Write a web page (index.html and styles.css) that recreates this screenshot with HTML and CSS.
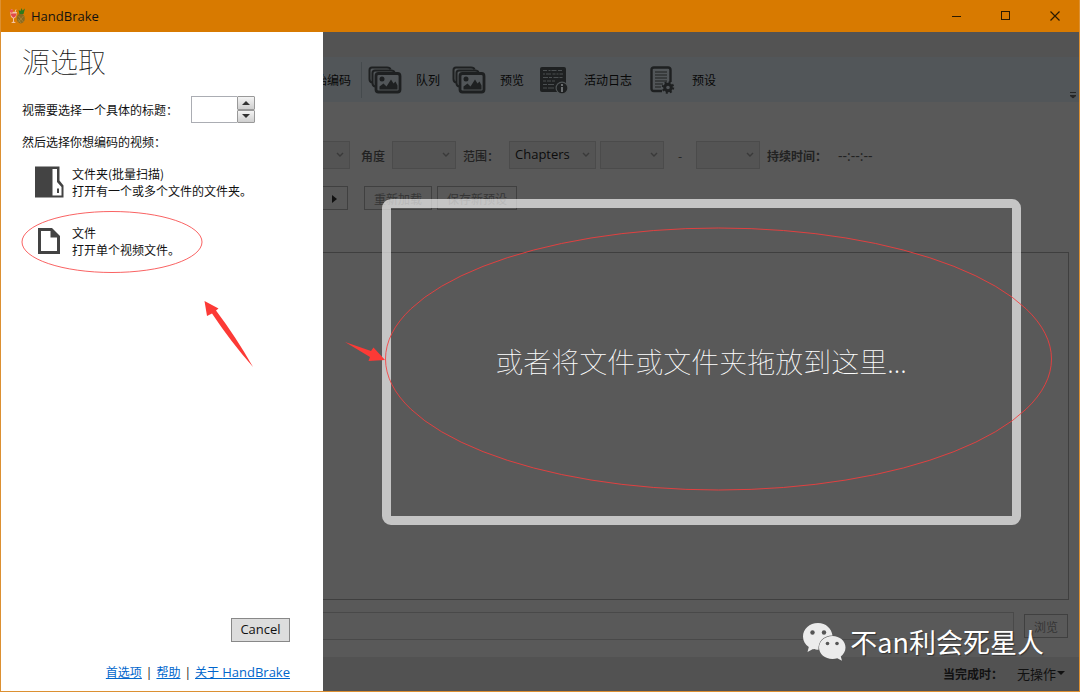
FILE: index.html
```html
<!DOCTYPE html>
<html lang="zh-CN">
<head>
<meta charset="utf-8">
<meta name="viewport" content="width=device-width, initial-scale=1">
<title>HandBrake</title>
<link rel="stylesheet" href="styles.css">
</head>
<body>
<svg class="defs" width="0" height="0" aria-hidden="true">
  <symbol id="chevron" viewBox="0 0 8 6"><path d="M1 1l3 3 3-3" fill="none" stroke="currentColor" stroke-width="1.4"/></symbol>
  <symbol id="pictures" viewBox="0 0 34 28">
    <path d="M4 16.500Q1.500 16 1.500 13V4Q1.500 1.500 4 1.500H19Q22 1.500 22.500 3.500" fill="none" stroke="currentColor" stroke-width="2"/>
    <path d="M7 20.500Q4.500 20 4.500 17V7Q4.500 4.500 7 4.500H23Q26 4.500 26.500 6.500" fill="none" stroke="currentColor" stroke-width="2"/>
    <rect x="8" y="7.500" width="24" height="18.500" rx="2.500" fill="none" stroke="currentColor" stroke-width="2.800"/>
    <circle cx="14" cy="13" r="2.500" fill="currentColor"/>
    <path d="M11.500 23.500v-3l4-3 3 3 4.500-7 2.500 4 2-2 2 4v4z" fill="currentColor"/>
  </symbol>
</svg>
<div class="window">
  <header class="titlebar">
    <svg class="app-icon" viewBox="0 0 16 16" width="16" height="16" aria-hidden="true">
      <path d="M1 4h7l-1 5-2 1.500v3l2 1.500H2l2-1.500v-3L2 9z" fill="#f3c4a4"/>
      <path d="M1.500 5.500h6l-1 3-2 1.200L2.500 8z" fill="#e0484a"/>
      <path d="M4 4L2.500 1M6 4l1-2.500" stroke="#f3c4a4"/>
      <circle cx="2.500" cy="3" r="1.800" fill="#e85450"/>
      <ellipse cx="11.800" cy="10.500" rx="4" ry="5" fill="#8a6a20"/>
      <path d="M9.500 8l5 6M9 11l3 4M14.500 8l-5 6" stroke="#b8903c" stroke-width=".6"/>
      <path d="M10.500 6L9.500 2l2 1 1-3 1 2.500L16 .5 14.500 6z" fill="#2f7a1c"/>
    </svg>
    <h1 class="app-name">HandBrake</h1>
    <div class="window-controls">
      <button class="window-button" type="button" aria-label="Minimize"><svg width="10" height="10" viewBox="0 0 10 10"><path d="M0 5.500h9" stroke="#2b1a00"/></svg></button>
      <button class="window-button" type="button" aria-label="Maximize"><svg width="10" height="10" viewBox="0 0 10 10"><rect x=".5" y=".5" width="8" height="8" fill="none" stroke="#2b1a00"/></svg></button>
      <button class="window-button" type="button" aria-label="Close"><svg width="10" height="10" viewBox="0 0 10 10"><path d="M.5.5l9 9M9.500.5l-9 9" stroke="#2b1a00" stroke-width="1.200"/></svg></button>
    </div>
  </header>

  <div class="content">
    <aside class="source-panel">
      <h2 class="source-heading">源选取</h2>
      <div class="title-row">
        <label for="title-number">视需要选择一个具体的标题：</label>
        <div class="spinner">
          <input class="spinner-input" id="title-number" type="text">
          <div class="spinner-buttons">
            <button class="spinner-button" type="button" aria-label="增加"><svg width="8" height="4" viewBox="0 0 8 4"><path d="M0 4l4-4 4 4z" fill="#333"/></svg></button>
            <button class="spinner-button" type="button" aria-label="减少"><svg width="8" height="4" viewBox="0 0 8 4"><path d="M0 0l4 4 4-4z" fill="#333"/></svg></button>
          </div>
        </div>
      </div>
      <p class="source-hint">然后选择你想编码的视频：</p>
      <div class="source-options">
        <button class="source-option" type="button">
          <svg class="option-icon" width="30" height="32" viewBox="0 0 30 32" aria-hidden="true">
            <path d="M0 .5h24.500v14l4 5v12H0z" fill="#434343"/>
            <path d="M17.500 3H22v13l4.500 5v8.500h-9z" fill="#fff"/>
            <rect x="22" y="22.500" width="2" height="4.500" fill="#434343"/>
          </svg>
          <span>文件夹(批量扫描)<br>打开有一个或多个文件的文件夹。</span>
        </button>
        <button class="source-option" type="button">
          <svg class="option-icon" width="30" height="32" viewBox="0 0 30 32" aria-hidden="true">
            <path d="M3 3h14l8 8v18H3z" fill="#434343"/>
            <path d="M6 6h9.500v6.500H22V26H6z" fill="#fff"/>
          </svg>
          <span>文件<br>打开单个视频文件。</span>
        </button>
      </div>
      <div class="source-footer">
        <button class="cancel-button" type="button">Cancel</button>
        <nav class="links"><a href="#preferences">首选项</a><span>|</span><a href="#help">帮助</a><span>|</span><a href="#about">关于 <span class="latin">HandBrake</span></a></nav>
      </div>
    </aside>

    <main class="workspace">
      <div class="menu-strip"></div>
      <div class="toolbar">
        <button class="tool tool-start" type="button">开始编码</button>
        <span class="tool-separator"></span>
        <button class="tool" type="button"><span class="tool-icon"><svg width="34" height="28"><use href="#pictures"/></svg></span>队列</button>
        <button class="tool" type="button"><span class="tool-icon"><svg width="34" height="28"><use href="#pictures"/></svg></span>预览</button>
        <button class="tool" type="button"><span class="tool-icon">
          <svg width="28" height="28" viewBox="0 0 28 28">
            <rect x="0" y="1" width="26" height="25" rx="2" fill="currentColor"/>
            <g stroke="#4b4f51" stroke-width="1.200">
              <path d="M3 4.500h20" stroke-dasharray="4 1.500 2 1 5 1.500"/>
              <path d="M3 8h20" stroke-dasharray="2 1 5 1.500 3 1"/>
              <path d="M3 11.500h20" stroke-dasharray="5 1 3 1.500"/>
              <path d="M3 15h13" stroke-dasharray="3 1 4 1"/>
              <path d="M3 18.500h12M3 22h12" stroke-dasharray="4 1 6 1"/>
            </g>
            <circle cx="22" cy="22" r="6.500" fill="#515557"/><circle cx="22" cy="22" r="5.300" fill="currentColor"/>
            <path d="M22 18v2M22 21v5" stroke="#6b6e70" stroke-width="2"/>
          </svg></span>活动日志</button>
        <button class="tool" type="button"><span class="tool-icon">
          <svg width="26" height="28" viewBox="0 0 26 28">
            <path d="M13 25H5q-2.500 0-2.500-2.500V4Q2.500 1.500 5 1.500h14q2.500 0 2.500 2.500v12" fill="none" stroke="currentColor" stroke-width="2.400"/>
            <path d="M6 6h12M6 9h12M6 12h12M6 15h12M6 18h8M6 21h6" stroke="currentColor" stroke-width="1.200"/>
            <circle cx="19" cy="21.500" r="3.300" fill="none" stroke="currentColor" stroke-width="3"/>
            <circle cx="19" cy="21.500" r="5.200" fill="none" stroke="currentColor" stroke-width="2" stroke-dasharray="2 2.080"/>
          </svg></span>预设</button>
        <svg class="tool-overflow" width="6" height="8" viewBox="0 0 6 8" aria-hidden="true"><path d="M0 1.500h6M0 4.500h6L3 7z" fill="#262626" stroke="#262626"/></svg>
      </div>

      <div class="range-row">
        <span class="combo combo-cut"><select disabled aria-label="标题"></select><svg width="8" height="6"><use href="#chevron"/></svg></span>
        <label class="angle-label" for="angle">角度</label>
        <span class="combo"><select id="angle" disabled></select><svg width="8" height="6"><use href="#chevron"/></svg></span>
        <label class="range-label" for="range">范围：</label>
        <span class="combo combo-range"><select id="range" disabled><option>Chapters</option></select><svg width="8" height="6"><use href="#chevron"/></svg></span>
        <span class="combo combo-from"><select disabled aria-label="起始"></select><svg width="8" height="6"><use href="#chevron"/></svg></span>
        <span class="dash">-</span>
        <span class="combo"><select disabled aria-label="结束"></select><svg width="8" height="6"><use href="#chevron"/></svg></span>
        <span class="duration-label">持续时间：</span>
        <span class="duration">--:--:--</span>
      </div>

      <div class="preset-row">
        <button class="plain-button more-button" type="button" aria-label="更多预设"><svg width="6" height="10" viewBox="0 0 6 10"><path d="M0 1l5 4-5 4z" fill="#111"/></svg></button>
        <button class="plain-button" type="button" disabled>重新加载</button>
        <button class="plain-button" type="button" disabled>保存新预设</button>
      </div>

      <section class="tab-panel"></section>

      <div class="save-row">
        <input class="save-path" type="text" disabled aria-label="另存为">
        <button class="plain-button browse-button" type="button" disabled>浏览</button>
      </div>

      <footer class="statusbar">
        <span class="when-done">当完成时：</span>
        <button class="done-action" type="button">无操作<svg width="8" height="4" viewBox="0 0 8 4"><path d="M0 0h8L4 4z" fill="#111"/></svg></button>
      </footer>

      <div class="drop-layer"><div class="drop-zone">或者将文件或文件夹拖放到这里...</div></div>
    </main>
  </div>

  <svg class="annotations" width="1080" height="692" viewBox="0 0 1080 692" aria-hidden="true">
    <g fill="none" stroke="#f83c3c">
      <ellipse cx="112" cy="242" rx="90" ry="30.500" stroke-opacity=".8"/>
      <ellipse cx="718.500" cy="359" rx="333" ry="131" stroke-opacity=".85"/>
    </g>
    <g fill="#fc3a36">
      <path d="M204.500 301L218.500 308.500 216 310.500Q236 337 253 367 231 342 212 313.500L207 316z"/>
      <path d="M345 342L371 351 373.500 347.500 385 360 368.500 361 370 357z"/>
    </g>
  </svg>

  <div class="watermark">
    <svg width="43" height="38" viewBox="0 0 43 38" aria-hidden="true">
      <path d="M15 0C6.500 0 0 6 0 13.500c0 4.500 2.200 8 5.800 10.500L4.500 29l5.500-3c2 .6 3.500.8 5.500.8C15 19 20 12.500 29.500 12.500 28.500 5.500 23 0 15 0z" fill="#ececec"/>
      <path d="M29.500 13C22 13 16 18 16 24.500S22 36 29.500 36c1.700 0 3.300-.3 4.800-.8l4.700 2.500-1.200-4.200c2.700-2.200 4.700-5.200 4.700-9C42.500 18 36.700 13 29.500 13z" fill="#ececec"/>
      <g fill="#555"><circle cx="9.500" cy="9.500" r="2.200"/><circle cx="21" cy="9.500" r="2.200"/><circle cx="24.500" cy="20.500" r="1.800"/><circle cx="34" cy="20.500" r="1.800"/></g>
    </svg>
    <span>不an利会死星人</span>
  </div>
</div>
</body>
</html>
```
FILE: styles.css
```css
* {
  box-sizing: border-box;
}

body {
  margin: 0;
  font: 12px/17px "Noto Sans CJK SC", "Open Sans", sans-serif;
  color: #111;
}

button,
input,
select {
  margin: 0;
  padding: 0;
  border: 0;
  border-radius: 0;
  background: none;
  font: inherit;
  color: inherit;
}

h1,
h2,
p {
  margin: 0;
  font-weight: 400;
}

.defs {
  position: absolute;
}

.window {
  position: relative;
  display: flex;
  flex-direction: column;
  min-height: 100vh;
  border: 1px solid #dc9032;
  border-top: 0;
  overflow: hidden;
}

/* Title bar */
.titlebar {
  display: flex;
  align-items: center;
  height: 32px;
  padding-left: 8px;
  background: #d87a00;
}

.app-name {
  margin-left: 6px;
  font: 13px/17px "Open Sans", sans-serif;
}

.window-controls {
  display: flex;
  align-self: stretch;
  margin-left: auto;
}

.window-button {
  display: grid;
  place-items: center;
  width: 49px;
}

.content {
  display: flex;
  flex: 1;
}

/* Source selection */
.source-panel {
  display: flex;
  flex-direction: column;
  flex: none;
  width: 322px;
  padding: 10px 33px 10px 21px;
  background: #fff;
}

.source-heading {
  font-size: 28px;
  font-weight: 100;
  line-height: 38px;
}

.title-row {
  display: flex;
  align-items: center;
  gap: 13px;
  margin-top: 16px;
}

.spinner {
  display: flex;
  height: 27px;
}

.spinner-input {
  width: 46px;
  border: 1px solid #abadb3;
  border-right: 0;
}

.spinner-buttons {
  display: flex;
  flex-direction: column;
  width: 18px;
}

.spinner-button {
  display: grid;
  flex: 1;
  place-items: center;
  border: 1px solid #999;
  border-radius: 1px;
  background: linear-gradient(#f4f4f4, #cfcfcf);
}

.source-hint {
  margin-top: 10px;
}

.source-options {
  display: flex;
  flex-direction: column;
  gap: 25px;
  margin-top: 15px;
  padding-left: 13px;
}

.source-option {
  display: flex;
  align-items: center;
  gap: 7px;
  text-align: left;
}

.option-icon {
  flex: none;
}

.source-footer {
  display: flex;
  flex-direction: column;
  align-items: flex-end;
  gap: 22px;
  margin-top: auto;
}

.cancel-button {
  width: 59px;
  height: 24px;
  padding-bottom: 2px;
  border: 1px solid #888;
  background: #ddd;
  font: 13px/17px "Open Sans", sans-serif;
}

.links {
  display: flex;
  gap: 4px;
  font-family: "Open Sans", "Noto Sans CJK SC", sans-serif;
  white-space: nowrap;
}

.links a {
  color: #0066cc;
}

.latin {
  font-size: 13px;
}

/* Dimmed main window */
.workspace {
  position: relative;
  display: flex;
  flex: 1;
  flex-direction: column;
  min-width: 0;
  background: #595959;
}

.menu-strip {
  height: 25px;
  background: #535353;
}

.toolbar {
  display: flex;
  align-items: center;
  height: 45px;
  padding-right: 3px;
  background: #525659;
  color: #080808;
}

.tool {
  display: flex;
  align-items: center;
  gap: 12px;
  padding-right: 12px;
  white-space: nowrap;
}

.tool-start {
  justify-content: flex-end;
  width: 28px;
  padding: 0;
  overflow: hidden;
}

.tool-separator {
  width: 1px;
  height: 36px;
  margin: 0 6px 0 10px;
  background: #454a4d;
}

.tool-icon {
  display: grid;
  place-items: center start;
  width: 36px;
  color: #1e2021;
}

.tool:nth-of-type(n + 4) .tool-icon {
  justify-items: center;
}

.tool-overflow {
  align-self: flex-end;
  margin: 0 0 3px auto;
}

.range-row {
  display: flex;
  align-items: center;
  height: 28px;
  margin-top: 39px;
  color: #222;
  white-space: nowrap;
}

.combo {
  display: grid;
  align-items: center;
  width: 64px;
  height: 28px;
  border: 1px solid #4b4b4b;
  background: #545454;
}

.combo select,
.combo svg {
  grid-area: 1 / 1;
}

.combo select {
  width: 100%;
  padding: 0 0 2px 5px;
  appearance: none;
  color: #0c0c0c;
  font: 13px/17px "Open Sans", sans-serif;
  opacity: 1;
}

.combo svg {
  justify-self: end;
  margin-right: 5px;
  color: #3a3a3a;
  pointer-events: none;
}

.combo-cut {
  width: 27px;
  border-left: 0;
}

.combo-range {
  width: 87px;
}

.combo-from {
  margin-left: 4px;
}

.angle-label {
  margin: 0 7px 0 11px;
  font-weight: 500;
}

.range-label {
  margin: 0 10px 0 7px;
  font-weight: 500;
}

.dash {
  width: 32px;
  text-align: center;
}

.duration-label {
  margin: 0 11px 0 7px;
  font-weight: 700;
}

.duration {
  font: 14px/17px "Open Sans", sans-serif;
}

.preset-row {
  display: flex;
  gap: 5px;
  margin-top: 17px;
}

.plain-button {
  height: 24px;
  padding: 0 9px;
  border: 1px solid #404040;
  color: #353535;
}

.more-button {
  width: 25px;
  margin-right: 11px;
  border-left: 0;
}

.tab-panel {
  flex: 1;
  min-height: 100px;
  margin: 42px 10px 0 0;
  border: 1px solid #3f3f3f;
  border-left: 0;
}

.save-row {
  display: flex;
  align-items: center;
  gap: 10px;
  margin: 12px 11px 17px 0;
}

.save-path {
  flex: 1;
  height: 28px;
  border: 1px solid #494949;
  border-left: 0;
}

.statusbar {
  display: flex;
  align-items: center;
  justify-content: flex-end;
  gap: 14px;
  height: 34px;
  padding: 0 14px 2px 0;
  background: #525252;
}

.when-done {
  font-weight: 700;
}

.done-action {
  display: flex;
  align-items: center;
  gap: 1px;
  font-size: 13px;
}

.drop-layer {
  position: absolute;
  inset: 0;
  display: grid;
  place-items: center;
}

.drop-zone {
  display: grid;
  place-items: center;
  width: 639px;
  max-width: 90%;
  height: 326px;
  padding-bottom: 2px;
  border: 9px solid rgba(255, 255, 255, 0.65);
  border-radius: 9px;
  color: #fff;
  font-size: 28px;
  font-weight: 100;
  line-height: 40px;
}

.annotations {
  position: absolute;
  top: 0;
  left: -1px;
  pointer-events: none;
}

.watermark {
  position: absolute;
  right: 35px;
  bottom: 29px;
  display: flex;
  align-items: center;
  gap: 4px;
  color: #fff;
  font-size: 27px;
  line-height: 40px;
  text-shadow: 1px 1px 1px #333;
}
```
